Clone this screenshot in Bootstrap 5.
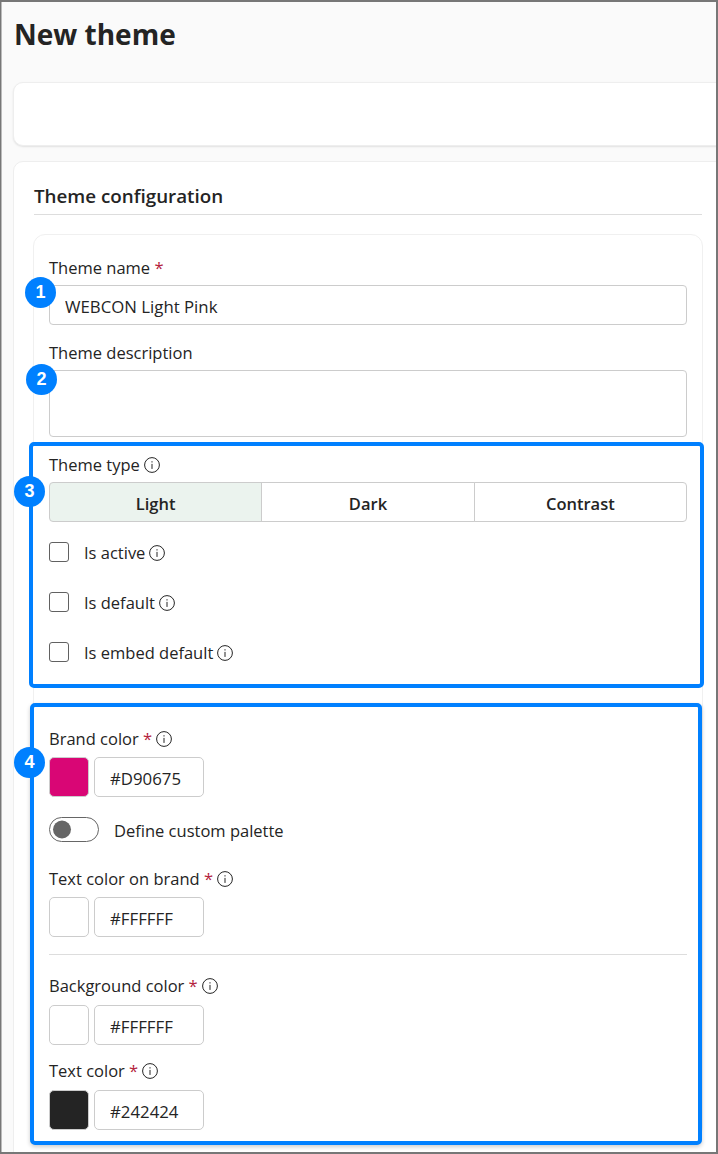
<!DOCTYPE html>
<html lang="en">
<head>
<meta charset="utf-8">
<title>New theme</title>
<link href="https://cdn.jsdelivr.net/npm/bootstrap@5.3.0/dist/css/bootstrap.min.css" rel="stylesheet">
<style>
html,body{margin:0;height:1154px;overflow:hidden;background:#fff}
body{font-family:"Open Sans","Noto Sans",sans-serif;font-size:16.5px;color:#242424}
.shot-frame{height:1154px;border:2px solid #777;border-left-width:1px;padding-left:1px;box-shadow:inset 1px 0 #bbb;background:#fafafa;overflow:hidden}
.page-title{font-size:28px;line-height:38px;font-weight:700;margin:0;padding:13px 0 29px 12px;color:#242424}
.blank-card,.main-card{background:#fff;border:1px solid #eee;border-radius:10px;margin-left:11px;width:740px;box-shadow:0 1px 2px rgba(0,0,0,.1)}
.blank-card{height:64px;margin-bottom:15px}
.main-card{height:1100px;box-shadow:none;padding:0 0 0 20px}
.cfg-col{width:669px}
.section-title{font-size:18.8px;line-height:24px;font-weight:600;padding:22px 0 6px;margin:0 1px 0 0;border-bottom:1px solid #ddd}
.inner-panel{margin:19px 0 0 -1px;width:670px;height:905px;border:1px solid #f0f0f0;border-radius:12px;padding:0 15px}
.fld-label{display:block;line-height:21px;height:23px;margin:0;white-space:nowrap}
.lb-5{margin-bottom:5px}.lb-6{margin-bottom:6px}.lb-7{margin-bottom:7px}
.lb-brand{margin:26px 0 6px}
.lb-text{margin:15px 0 7px}
.req{color:#b4233c}
.form-control.fld-input{height:40px;border:1px solid #ccc;border-radius:4px;padding:3px 15px 0;font-size:16.8px;color:#242424;background:#fff}
.form-control.fld-area{height:67px;resize:none}
.annot-wrap{position:relative}
.wrap-name{padding-top:22px}
.wrap-desc{padding-top:17px}
.annot-dot{position:absolute;width:31px;height:31px;border-radius:50%;background:#0080ff;color:#fff;font:700 18px/31px "Liberation Sans",sans-serif;text-align:center;z-index:2}
.dot-1{left:-24px;top:42px}
.dot-2{left:-23px;top:39px}
.dot-3{left:-19px;top:30px}
.dot-4{left:-20px;top:40px}
.annot-box{border:4px solid #0080ff;border-radius:5px;position:relative;background:#fff}
.box-type{margin:5px -17px 0 -20px;padding:8px 15px 21px 16px;height:246px}
.box-color{margin:15px -15px 0 -19px;padding:21px 11px 10px 15px;height:442px;box-shadow:0 2px 4px rgba(0,0,0,.2)}
.type-group{height:40px;width:638px}
.type-group .btn{flex:1 1 0;border:1px solid #ccc;background:#fff;color:#242424;font-weight:600;font-size:16.5px;padding:3px 0 0;line-height:36px;border-radius:4px}
.type-group .btn.is-on{background:#ebf3ee}
.check-row{height:20px;margin-top:30px;gap:15px}
.type-group + .check-row{margin-top:20px}
.check-row .form-check-input{width:20px;height:20px;margin:0;border:1px solid #616161;border-radius:3px;flex:none}
.check-row span{padding-top:2px}
.info-ic{width:16px;height:16px;vertical-align:-2px;margin-left:4px}
.swatch-row{gap:5px;height:40px}
.swatch{width:40px;height:40px;border:1px solid #ccc;border-radius:5px;background:#fff}
.sw-brand{background:#d90675}
.sw-dark{background:#242424}
.hex-input{width:110px!important;flex:none;border-radius:5px!important}
.toggle-row{height:25px;margin-top:20px;gap:15px;padding:0}
.toggle-row span{padding-top:3px}
.toggle-row .form-check-input{width:50px;height:25px;margin:0;float:none;border:1px solid #666;border-radius:13px;background-color:#fff;background-image:url("data:image/svg+xml,%3csvg xmlns='http://www.w3.org/2000/svg' viewBox='0 0 50 25'%3e%3ccircle cx='12' cy='11.5' r='9' fill='%23666'/%3e%3c/svg%3e");background-position:0 0;background-size:50px 25px;flex:none}
.color-rule{margin:17px 0 20px;border-top:1px solid #ddd;opacity:1;width:638px}
</style>
</head>
<body>
<svg width="0" height="0" class="d-block" aria-hidden="true"><defs>
<symbol id="ic-info" viewBox="0 0 16 16"><circle cx="8" cy="8" r="7.4" fill="none" stroke="#242424" stroke-width="1"/><rect x="7.5" y="6.9" width="1" height="5" fill="#242424"/><rect x="7.5" y="4.2" width="1" height="1.3" fill="#242424"/></symbol>
</defs></svg>
<div class="shot-frame">
  <h1 class="page-title">New theme</h1>
  <div class="blank-card"></div>
  <div class="main-card">
    <div class="cfg-col">
      <h2 class="section-title">Theme configuration</h2>
      <div class="inner-panel">
        <div class="annot-wrap wrap-name">
          <span class="annot-dot dot-1">1</span>
          <label class="fld-label lb-5">Theme name <span class="req">*</span></label>
          <input class="form-control fld-input" value="WEBCON Light Pink">
        </div>
        <div class="annot-wrap wrap-desc">
          <span class="annot-dot dot-2">2</span>
          <label class="fld-label lb-5">Theme description</label>
          <textarea class="form-control fld-input fld-area"></textarea>
        </div>
        <div class="annot-box box-type">
          <span class="annot-dot dot-3">3</span>
          <label class="fld-label lb-5">Theme type<svg class="info-ic"><use href="#ic-info"/></svg></label>
          <div class="btn-group type-group d-flex" role="group">
            <button type="button" class="btn is-on">Light</button>
            <button type="button" class="btn">Dark</button>
            <button type="button" class="btn">Contrast</button>
          </div>
          <div class="d-flex align-items-center check-row"><input class="form-check-input" type="checkbox"><span>Is active<svg class="info-ic"><use href="#ic-info"/></svg></span></div>
          <div class="d-flex align-items-center check-row"><input class="form-check-input" type="checkbox"><span>Is default<svg class="info-ic"><use href="#ic-info"/></svg></span></div>
          <div class="d-flex align-items-center check-row"><input class="form-check-input" type="checkbox"><span>Is embed default<svg class="info-ic"><use href="#ic-info"/></svg></span></div>
        </div>
        <div class="annot-box box-color">
          <span class="annot-dot dot-4">4</span>
          <label class="fld-label lb-6">Brand color <span class="req">*</span><svg class="info-ic"><use href="#ic-info"/></svg></label>
          <div class="d-flex swatch-row"><div class="swatch sw-brand"></div><input class="form-control fld-input hex-input" value="#D90675"></div>
          <div class="form-check form-switch d-flex align-items-center toggle-row"><input class="form-check-input" type="checkbox" role="switch"><span>Define custom palette</span></div>
          <label class="fld-label lb-brand">Text color on brand <span class="req">*</span><svg class="info-ic"><use href="#ic-info"/></svg></label>
          <div class="d-flex swatch-row"><div class="swatch"></div><input class="form-control fld-input hex-input" value="#FFFFFF"></div>
          <hr class="color-rule">
          <label class="fld-label lb-7">Background color <span class="req">*</span><svg class="info-ic"><use href="#ic-info"/></svg></label>
          <div class="d-flex swatch-row"><div class="swatch"></div><input class="form-control fld-input hex-input" value="#FFFFFF"></div>
          <label class="fld-label lb-text">Text color <span class="req">*</span><svg class="info-ic"><use href="#ic-info"/></svg></label>
          <div class="d-flex swatch-row"><div class="swatch sw-dark"></div><input class="form-control fld-input hex-input" value="#242424"></div>
        </div>
      </div>
    </div>
  </div>
</div>
<script src="https://cdn.jsdelivr.net/npm/bootstrap@5.3.0/dist/js/bootstrap.bundle.min.js"></script>
</body>
</html>
